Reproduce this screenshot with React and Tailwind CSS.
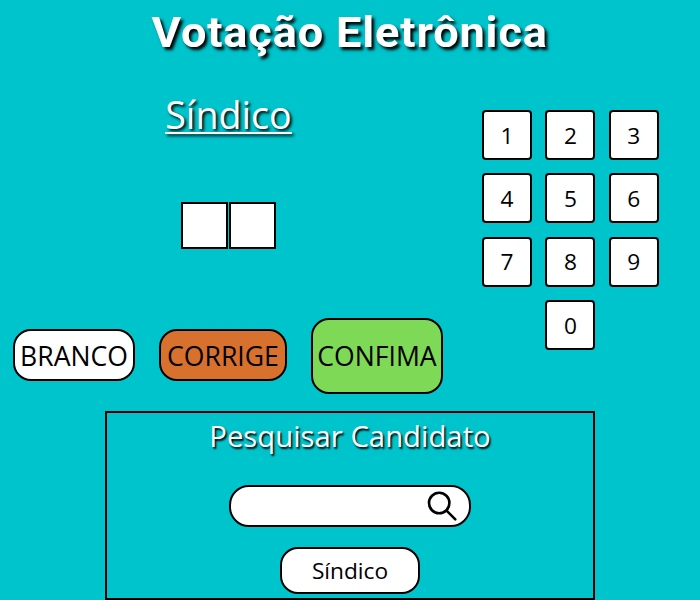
function Key({ children }) {
  return (
    <button className="flex h-[50px] w-[50px] items-center justify-center rounded-[4px] border-2 border-black bg-white pt-[2px] text-[22.7px] leading-none text-black">
      {children}
    </button>
  );
}

function Digit() {
  return <div className="h-[47px] w-[47px] border-2 border-black bg-white" />;
}

export default function App() {
  return (
    <main className="h-[600px] w-[700px] overflow-hidden bg-[#00c4cc] font-['Open_Sans','Noto_Sans',sans-serif] text-black">
      <h1 className="flex h-[62px] items-center justify-center whitespace-nowrap pt-[2px] font-['Roboto','Open_Sans',sans-serif] text-[43px] font-bold leading-none tracking-[0.8px] text-white [text-shadow:2.5px_2.5px_3px_#000]">
        <span className="inline-block scale-x-[1.05]">Votação Eletrônica</span>
      </h1>
      <div className="flex h-[349px]">
        <section className="w-[457px]">
          <h2 className="mt-[27px] h-[113px] text-center text-[37.7px] leading-[52px] text-white underline decoration-2 underline-offset-[3px] [text-shadow:2px_2px_3px_#000]">
            Síndico
          </h2>
          <div className="flex justify-center gap-px">
            <Digit />
            <Digit />
          </div>
          <div className="mt-[69px] flex items-center pl-[13px] text-[26.6px] leading-none">
            <button className="mb-[2px] h-[52px] w-[122px] whitespace-nowrap rounded-[18px] border-2 border-black bg-white pt-[2px]">BRANCO</button>
            <button className="mb-[2px] ml-[24px] h-[52px] w-[128px] whitespace-nowrap rounded-[18px] border-2 border-black bg-[#d9712e] pt-[2px]">CORRIGE</button>
            <button className="ml-[24px] h-[76px] w-[132px] whitespace-nowrap rounded-[18px] border-2 border-black bg-[#7ed957]">CONFIMA</button>
          </div>
        </section>
        <section className="mt-[48px] ml-[25px] flex w-[176.8px] flex-wrap content-start justify-center gap-[13.4px]">
          {[1, 2, 3, 4, 5, 6, 7, 8, 9, 0].map((n) => (
            <Key key={n}>{n}</Key>
          ))}
        </section>
      </div>
      <section className="mx-auto flex h-[189px] w-[490px] flex-col items-center border-2 border-black">
        <h3 className="mt-[3px] text-[29.3px] leading-[40px] text-white [text-shadow:1.5px_1.5px_2px_#000]">Pesquisar Candidato</h3>
        <div className="mt-[29px] flex h-[42px] w-[242px] shrink-0 items-center justify-end rounded-[20px] border-2 border-black bg-white pr-[11px]">
          <svg className="h-[32px] w-[32px]" viewBox="0 0 32 32" fill="none" stroke="#000" strokeWidth="2.6" strokeLinecap="round">
            <circle cx="13.2" cy="13" r="10.2" />
            <path d="M20.8 20.8 29.3 29.3" />
          </svg>
        </div>
        <button className="mt-[20px] h-[47px] w-[140px] shrink-0 rounded-[18px] border-2 border-black bg-white pt-px text-[22.7px] leading-none">Síndico</button>
      </section>
    </main>
  );
}
